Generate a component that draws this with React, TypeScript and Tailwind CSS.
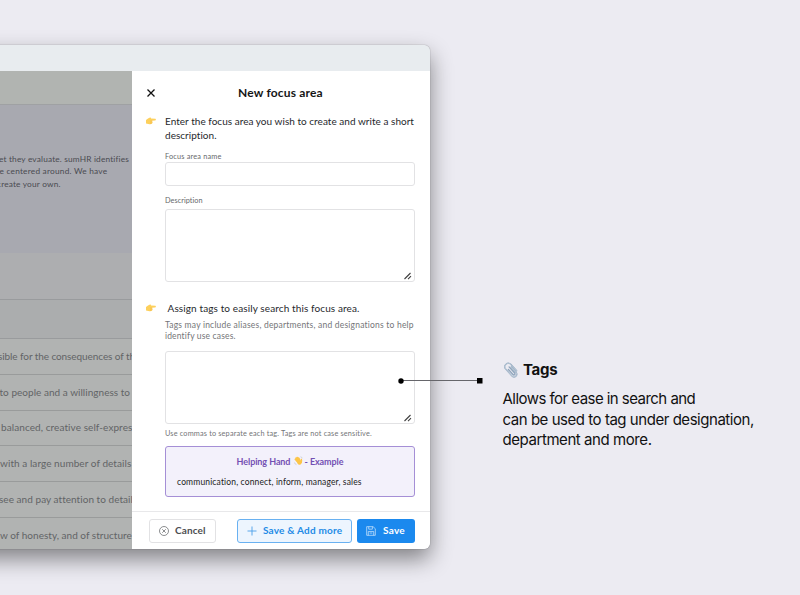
import type { ReactNode } from 'react';

const tableRows = [
  { text: 'sible for the consequences of the', style: '-ml-[2px] tracking-[-0.080px]' },
  { text: 'to people and a willingness to', style: '-ml-[0.500px] tracking-[0.030px]' },
  { text: 'balanced, creative self-expression', style: 'ml-[1px] tracking-[0.080px]' },
  { text: 'with a large number of details', style: 'tracking-[0.060px]' },
  { text: 'see and pay attention to details', style: '-ml-[1px] tracking-[0.040px]' },
  { text: 'w of honesty, and of structure', style: 'tracking-[0.020px]' },
];

function PointingHand() {
  return (
    <svg className="h-[8px] w-[10px] shrink-0" viewBox="0 0 20 16">
      <path d="M0 6 L4 3 L8 1 Q10 0 10 3 L19 3.5 Q21 6 18 7 L12 7.5 L13 12 Q11 15 7 14.5 L0 13 Z" fill="#fdd05c" />
      <path d="M8 8 L13 8 M8 10.5 L13 10.5 M8 13 L11 13" stroke="#f3b84a" strokeWidth="1" />
    </svg>
  );
}

function WavingHand() {
  return (
    <svg className="mr-[2px] ml-px inline-block h-[10px] w-[9px] align-[-1px]" viewBox="0 0 18 20">
      <path
        d="M5.500 10 L2.500 6.500 M7 8 L4 4 M9 7 L6.500 3 M11 7 L9.500 4"
        stroke="#fcc548"
        strokeWidth="3"
        strokeLinecap="round"
      />
      <path d="M4 9 L11 5 L13 9 L14 5 Q16.500 5 16.500 9 Q17 15 12.500 17.500 Q9 18.500 7 15 Z" fill="#fcc548" />
      <path d="M13 1.500 Q16 2 16.500 4.500 M1 13 Q1.500 16.500 5 17.500" stroke="#a9b4c2" strokeWidth="1" fill="none" />
    </svg>
  );
}

function Paperclip() {
  return (
    <svg className="h-[17px] w-[16px] shrink-0" viewBox="0 0 32 34" fill="none">
      <g transform="rotate(-42 16 17)" strokeLinecap="round">
        <path
          d="M21 12 V26 Q21 32 15.500 32 Q10 32 10 26 V8 Q10 1 16.500 1 Q24 1 24 8 V25 M13.500 12 V25 Q13.500 28 15.700 28 Q18 28 18 25 V9"
          stroke="#8fa5bc"
          strokeWidth="2.600"
        />
        <path
          d="M21 12 V26 Q21 32 15.500 32 Q10 32 10 26 V8 Q10 1 16.500 1 Q24 1 24 8 V25"
          stroke="#c8d6e3"
          strokeWidth="1.200"
        />
      </g>
    </svg>
  );
}

function ResizableBox() {
  return (
    <div className="flex h-[73px] w-[250px] items-end justify-end rounded-[3px] border border-[#e2e2e4] bg-white pr-[2px] pb-[1px]">
      <svg className="h-[8px] w-[8px]" viewBox="0 0 8 8" stroke="#404040" strokeWidth="1.100">
        <path d="M0.500 7 L6.500 1 M4 7.200 L7 4.200" />
      </svg>
    </div>
  );
}

function Line({ className, children }: { className: string; children: ReactNode }) {
  return <div className={`whitespace-nowrap ${className}`}>{children}</div>;
}

function DimmedPage() {
  return (
    <div className="flex h-full w-[132px] flex-col overflow-hidden bg-[#b1b3b2] text-[#626466]">
      <div className="h-[34px] shrink-0 border-b border-[#9fa1a3] bg-[#b1b4b1]" />
      <div className="h-[148px] shrink-0 bg-[#a8a9b0] pt-[48px] text-[8.300px] leading-[12.300px] text-[#4a4b50]">
        <Line className="-ml-[1px] tracking-[0.170px]">et they evaluate. sumHR identifies</Line>
        <Line className="-ml-[0.500px] tracking-[0.220px]">e centered around. We have</Line>
        <Line className="-ml-[3px] tracking-[0.180px]">create your own.</Line>
      </div>
      <div className="h-[47px] shrink-0 border-b border-[#999b9d] bg-[#adaeb0]" />
      <div className="h-[39px] shrink-0 border-b border-[#999b9d] bg-[#abadae]" />
      {tableRows.map((row) => (
        <div
          key={row.text}
          className="flex h-[35.800px] shrink-0 items-center border-b border-[#999b9b] text-[10px]"
        >
          <Line className={row.style}>{row.text}</Line>
        </div>
      ))}
    </div>
  );
}

function FocusAreaPanel() {
  return (
    <div className="flex h-full w-[298px] flex-col bg-white">
      <header className="flex h-[43px] shrink-0 items-center pl-[15px]">
        <svg className="h-[8px] w-[8px]" viewBox="0 0 8 8" stroke="#111" strokeWidth="1.300">
          <path d="M0.500 0.500 L7.500 7.500 M7.500 0.500 L0.500 7.500" />
        </svg>
        <Line className="ml-[83px] text-[12px] font-bold tracking-[0.180px] text-[#151515]">New focus area</Line>
      </header>
      <main className="h-[397px] shrink-0 pl-[14px]">
        <div className="flex">
          <div className="w-[19px] pt-[3px]">
            <PointingHand />
          </div>
          <div className="text-[10px] leading-[14px] text-[#26282c]">
            <Line className="tracking-[0.030px]">Enter the focus area you wish to create and write a short</Line>
            <Line className="tracking-[0.030px]">description.</Line>
          </div>
        </div>
        <div className="pl-[19px]">
          <Line className="mt-[10px] h-[10px] text-[7.300px] leading-[9px] tracking-[0.200px] text-[#66686b]">
            Focus area name
          </Line>
          <div className="h-[24px] w-[250px] rounded-[3px] border border-[#e2e2e4]" />
          <Line className="mt-[10px] h-[13px] text-[7.300px] leading-[10px] tracking-[0.050px] text-[#66686b]">
            Description
          </Line>
          <ResizableBox />
        </div>
        <div className="mt-[19px] flex h-[14px] items-center">
          <div className="w-[21.500px]">
            <PointingHand />
          </div>
          <Line className="text-[10px] leading-[14px] tracking-[0.110px] text-[#26282c]">
            Assign tags to easily search this focus area.
          </Line>
        </div>
        <div className="pl-[19px]">
          <div className="mt-[5px] h-[31px] text-[8.500px] leading-[11px] text-[#747578]">
            <Line className="tracking-[0.210px]">Tags may include aliases, departments, and designations to help</Line>
            <Line className="tracking-[0.160px]">identify use cases.</Line>
          </div>
          <ResizableBox />
          <Line className="mt-[4px] h-[18px] text-[7.300px] leading-[11px] tracking-[0.170px] text-[#747578]">
            Use commas to separate each tag. Tags are not case sensitive.
          </Line>
          <div className="h-[51px] w-[250px] rounded-[3px] border border-[#a58fd6] bg-[#f3f1fb] pt-[8px]">
            <Line className="text-center text-[9px] leading-[13px] font-bold tracking-[-0.080px] text-[#7350b3]">
              Helping Hand <WavingHand />- Example
            </Line>
            <Line className="mt-[8px] pl-[11px] text-[8.500px] leading-[13px] tracking-[0.150px] text-[#1c1c22]">
              communication, connect, inform, manager, sales
            </Line>
          </div>
        </div>
      </main>
      <footer className="flex grow items-center border-t border-[#e8e8ea] pl-[17px] text-[10px] font-bold">
        <div className="flex h-[24px] w-[67px] items-center rounded-[3px] border border-[#e2e2e4] pl-[9px] text-[#4c4e52]">
          <svg className="h-[10px] w-[10px]" viewBox="0 0 20 20" fill="none" stroke="#66686b" strokeWidth="1.500">
            <circle cx="10" cy="10" r="9" />
            <path d="M6.500 6.500 L13.500 13.500 M13.500 6.500 L6.500 13.500" />
          </svg>
          <Line className="ml-[6px] tracking-[0.120px]">Cancel</Line>
        </div>
        <div className="ml-[21px] flex h-[24px] w-[115px] items-center rounded-[3px] border border-[#69b1f1] bg-[#edf5fe] pl-[9px] text-[#238be6]">
          <svg className="h-[10px] w-[10px]" viewBox="0 0 10 10" stroke="#4a9fea" strokeWidth="0.900">
            <path d="M5 0.500 V9.500 M0.500 5 H9.500" />
          </svg>
          <Line className="ml-[6px] tracking-[0.200px]">Save &amp; Add more</Line>
        </div>
        <div className="ml-[5px] flex h-[24px] w-[58px] items-center rounded-[3px] bg-[#1b89ee] pl-[9px] text-white">
          <svg className="h-[10px] w-[10px]" viewBox="0 0 22 22" fill="none" stroke="#cfe6fc" strokeWidth="1.600">
            <path d="M1.500 1.500 H15.500 L20.500 6 V20.500 H1.500 Z M6 1.500 V7 H14 V1.500 M5 20.500 V12 H17 V20.500 M8 15.500 H14" />
          </svg>
          <Line className="ml-[7px] tracking-[0.250px]">Save</Line>
        </div>
      </footer>
    </div>
  );
}

function TagsCallout() {
  return (
    <div className="pt-[360px] pl-[72.500px] font-['Inter','Liberation_Sans',sans-serif] text-[#111]">
      <div className="flex h-[20px] items-center">
        <Paperclip />
        <Line className="ml-[4.500px] text-[15px] font-bold tracking-[-0.300px]">Tags</Line>
      </div>
      <div className="mt-[9px] text-[15px] leading-[20.500px]">
        <Line className="tracking-[-0.540px]">Allows for ease in search and</Line>
        <Line className="tracking-[-0.460px]">can be used to tag under designation,</Line>
        <Line className="tracking-[-0.430px]">department and more.</Line>
      </div>
    </div>
  );
}

export default function App() {
  return (
    <div className="relative flex h-[595px] w-[800px] overflow-hidden bg-[#ecebf2] font-['Lato','Noto_Sans',sans-serif]">
      <div className="-ml-[40px] h-[549px] w-[470px] shrink-0 pt-[45px]">
        <div className="h-[504px] overflow-hidden rounded-[6px] shadow-[0_0_1px_rgba(0,0,0,0.600),0_10px_22px_rgba(0,0,0,0.450)]">
          <div className="h-[26px] bg-[#e8ecef]" />
          <div className="flex h-[478px] pl-[40px]">
            <DimmedPage />
            <FocusAreaPanel />
          </div>
        </div>
      </div>
      <TagsCallout />
      <svg className="absolute top-[377px] left-[398px] h-[8px] w-[85px]" viewBox="0 0 85 8">
        <path d="M3 3.500 H82" stroke="#66666b" strokeWidth="1" />
        <circle cx="3" cy="4" r="2.700" fill="#000" />
        <rect x="79" y="1" width="5.500" height="5.500" fill="#000" />
      </svg>
    </div>
  );
}
